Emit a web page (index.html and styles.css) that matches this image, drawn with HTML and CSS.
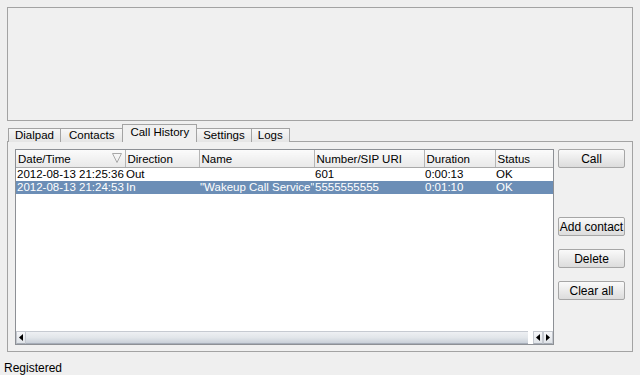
FILE: index.html
```html
<!DOCTYPE html>
<html lang="en">
<head>
    <meta charset="UTF-8">
    <meta name="viewport" content="width=device-width, initial-scale=1.0">
    <title>Call History</title>
    <link rel="stylesheet" href="styles.css">
</head>
<body>
    <div class="video-area"></div>

    <div class="tabs">
        <div class="tab">Dialpad</div>
        <div class="tab wide">Contacts</div>
        <div class="tab active">Call History</div>
        <div class="tab">Settings</div>
        <div class="tab">Logs</div>
    </div>

    <div class="panel">
        <div class="history">
            <table class="grid">
                <colgroup>
                    <col class="c-date">
                    <col class="c-dir">
                    <col class="c-name">
                    <col class="c-num">
                    <col class="c-dur">
                    <col class="c-status">
                </colgroup>
                <thead>
                    <tr>
                        <th class="sorted">Date/Time
                            <svg class="sort-arrow" width="10" height="10" viewBox="0 0 10 10"><path d="M0.5 0.5 L9.5 0.5 L5 9.5 Z" fill="none" stroke="#a8a8a8" stroke-width="1"/></svg>
                        </th>
                        <th>Direction</th>
                        <th>Name</th>
                        <th>Number/SIP URI</th>
                        <th>Duration</th>
                        <th>Status</th>
                    </tr>
                </thead>
                <tbody>
                    <tr>
                        <td>2012-08-13 21:25:36</td>
                        <td>Out</td>
                        <td></td>
                        <td>601</td>
                        <td>0:00:13</td>
                        <td>OK</td>
                    </tr>
                    <tr class="selected">
                        <td>2012-08-13 21:24:53</td>
                        <td>In</td>
                        <td>"Wakeup Call Service"</td>
                        <td>5555555555</td>
                        <td>0:01:10</td>
                        <td>OK</td>
                    </tr>
                </tbody>
            </table>
            <div class="filler"></div>
            <div class="hscroll">
                <div class="arrow-btn">
                    <svg width="4" height="7" viewBox="0 0 4 7"><path d="M4 0 L0 3.5 L4 7 Z" fill="#000"/></svg>
                </div>
                <div class="handle"><span class="grip"></span></div>
                <div class="gap"></div>
                <div class="arrow-btn">
                    <svg width="4" height="7" viewBox="0 0 4 7"><path d="M4 0 L0 3.5 L4 7 Z" fill="#000"/></svg>
                </div>
                <div class="arrow-btn">
                    <svg width="4" height="7" viewBox="0 0 4 7"><path d="M0 0 L4 3.5 L0 7 Z" fill="#000"/></svg>
                </div>
            </div>
        </div>

        <div class="side-buttons">
            <button class="button">Call</button>
            <button class="button add">Add contact</button>
            <button class="button">Delete</button>
            <button class="button">Clear all</button>
        </div>
    </div>

    <div class="status">Registered</div>
</body>
</html>
```

FILE: styles.css
```css
body {
    margin: 0;
    padding: 7px 0 0 0;
    background-color: #efefef;
    font-family: "Liberation Sans", Arial, sans-serif;
    font-size: 11.5px;
    color: #000;
    width: 640px;
    height: 375px;
    overflow: hidden;
}

/* empty area on top (video / info frame) */
.video-area {
    margin: 0 7px;
    height: 112px;
    border: 1px solid #a3a3a3;
    background-color: #f0f0f0;
}

/* tab bar */
.tabs {
    display: flex;
    align-items: flex-end;
    margin: 3px 0 -1px 8px;
    position: relative;
    z-index: 1;
}
.tab {
    height: 13px;
    line-height: 13px;
    padding: 0 6px;
    border: 1px solid #a3a3a3;
    border-left: none;
    border-bottom: none;
    background: linear-gradient(#f7f7f7, #e4e4e4);
}
.tab.wide { padding: 0 8px; }
.tab:first-child { border-left: 1px solid #a3a3a3; }
.tab.active {
    height: 17px;
    line-height: 15px;
    padding: 0 7px;
    border-left: 1px solid #a3a3a3;
    margin-left: -1px;
    background: #f0f0f0;
}
.tab.active + .tab { border-left: none; }

.panel {
    display: flex;
    align-items: flex-start;
    gap: 4px;
    margin: 0 7px;
    height: 195px;
    padding: 7px 0 7px 7px;
    border: 1px solid #a3a3a3;
    background-color: #f0f0f0;
}

/* call history list */
.history {
    display: flex;
    flex-direction: column;
    width: 537px;
    height: 194px;
    border: 1px solid #8d9095;
    background-color: #fff;
}
.grid {
    table-layout: fixed;
    border-collapse: collapse;
    width: 537px;
}
.c-date { width: 109px; }
.c-dir { width: 74px; }
.c-name { width: 115px; }
.c-num { width: 110px; }
.c-dur { width: 71px; }
.c-status { width: 58px; }

.grid th {
    height: 17px;
    padding: 0 0 0 2px;
    text-align: left;
    font-weight: normal;
    background: linear-gradient(#fbfbfb, #e9e9e9);
    border-right: 1px solid #b5b5b5;
    border-bottom: 1px solid #a9a9a9;
    white-space: nowrap;
    overflow: hidden;
}
.grid th:last-child { border-right: none; }
.grid th.sorted { position: relative; }
.sort-arrow {
    position: absolute;
    right: 3px;
    top: 3px;
}
.grid td {
    height: 13px;
    line-height: 13px;
    padding: 0 0 0 1px;
    white-space: nowrap;
    overflow: hidden;
}
.grid tr.selected td {
    background-color: #6c8eb6;
    color: #fff;
}

.filler { flex: 1; }

/* horizontal scroll bar */
.hscroll {
    display: flex;
    height: 13px;
    background-color: #fff;
}
.arrow-btn {
    display: flex;
    align-items: center;
    justify-content: center;
    border: 1px solid #c4c8cf;
    border-bottom-color: #a8aeb7;
    background: linear-gradient(#f6f7f9, #dfe3e8);
    box-sizing: border-box;
    width: 10px;
}
.handle {
    flex: 1;
    display: flex;
    align-items: center;
    justify-content: center;
    border-top: 1px solid #c6cad1;
    border-bottom: 1px solid #a6adb8;
    background: linear-gradient(#eef0f3 0%, #e2e6ea 50%, #c9d0d9 100%);
}
.grip {
    width: 8px;
    height: 5px;
    background-image: radial-gradient(#b5bcc6 40%, transparent 45%);
    background-size: 2px 2px;
}
.gap { width: 5px; }

/* buttons on the right */
.side-buttons {
    display: flex;
    flex-direction: column;
    width: 67px;
}
.button {
    height: 19px;
    padding: 0;
    margin-bottom: 13px;
    font-family: "Liberation Sans", Arial, sans-serif;
    font-size: 12px;
    color: #000;
    border: 1px solid #a6a6a6;
    border-radius: 2px;
    background: linear-gradient(#fafafa, #dcdcdc);
}
.button.add { margin-top: 36px; }

.status {
    margin: 9px 0 0 4px;
    height: 15px;
    line-height: 15px;
    font-size: 12px;
}
```
